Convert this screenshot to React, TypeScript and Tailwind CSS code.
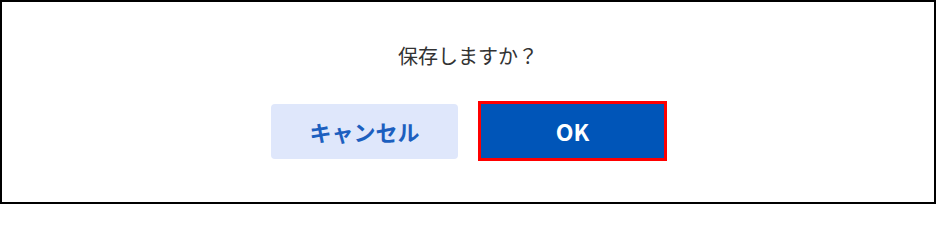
export default function App() {
  return (
    <div
      className="w-[936px] h-[204px] border-2 border-black bg-white flex flex-col items-center"
      style={{ fontFamily: '"Noto Sans CJK JP", "Noto Sans", sans-serif' }}
    >
      <p className="mt-[40px] text-[20px] leading-[28px] text-[#333333]">保存しますか？</p>
      <div className="mt-[31px] flex items-center gap-[20px] pl-[2px]">
        <button className="w-[187px] h-[55px] rounded-[4px] bg-[#dfe7fb] text-[#1c5fbf] text-[22px] font-bold">
          キャンセル
        </button>
        <button className="w-[189px] h-[60px] border-[3px] border-[#ff0000] bg-[#0055b8] text-white text-[23px] font-bold">
          OK
        </button>
      </div>
    </div>
  );
}
